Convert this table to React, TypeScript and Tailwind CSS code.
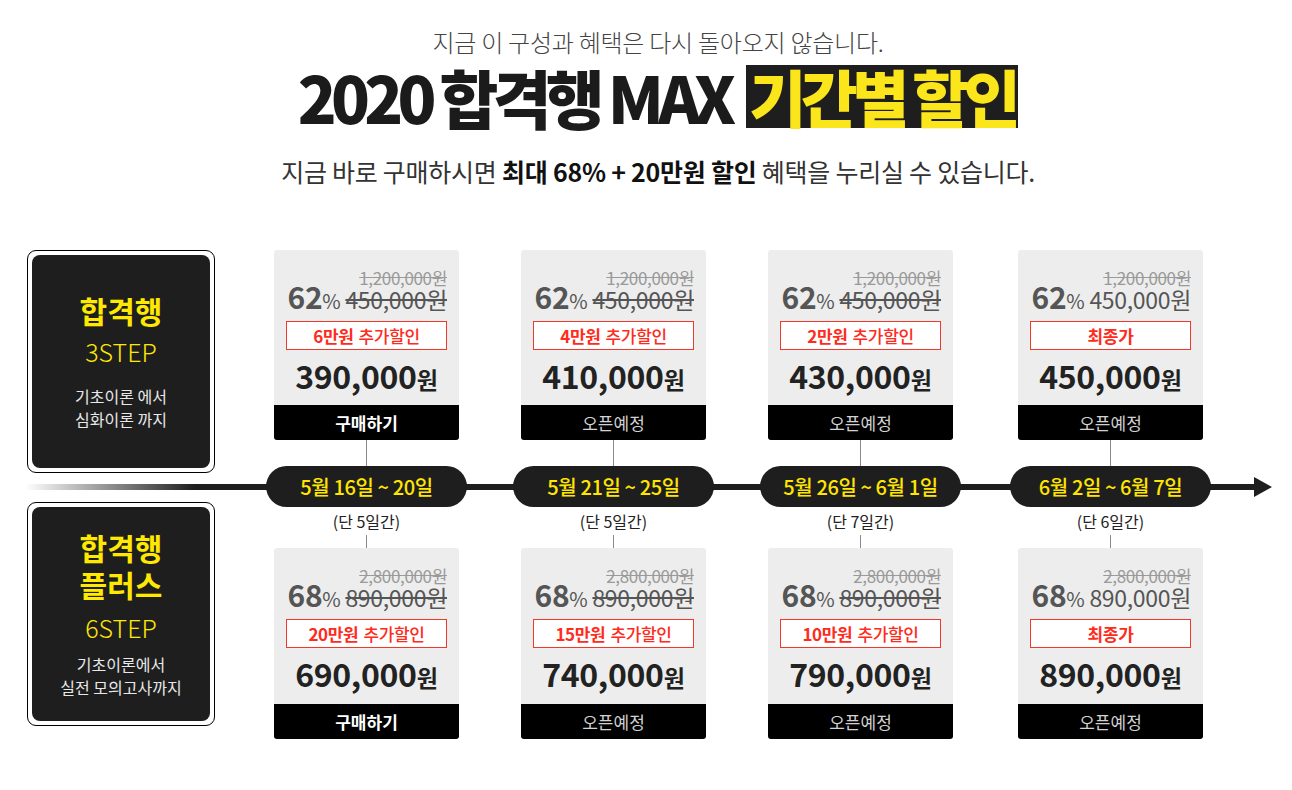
import React from "react";

type Deal = {
  orig: string;
  pct: string;
  sale: string;
  strike: boolean;
  extra?: string;
  price: string;
  buy: boolean;
};

const step3: Deal[] = [
  { orig: "1,200,000원", pct: "62", sale: "450,000원", strike: true, extra: "6만원", price: "390,000", buy: true },
  { orig: "1,200,000원", pct: "62", sale: "450,000원", strike: true, extra: "4만원", price: "410,000", buy: false },
  { orig: "1,200,000원", pct: "62", sale: "450,000원", strike: true, extra: "2만원", price: "430,000", buy: false },
  { orig: "1,200,000원", pct: "62", sale: "450,000원", strike: false, price: "450,000", buy: false },
];

const step6: Deal[] = [
  { orig: "2,800,000원", pct: "68", sale: "890,000원", strike: true, extra: "20만원", price: "690,000", buy: true },
  { orig: "2,800,000원", pct: "68", sale: "890,000원", strike: true, extra: "15만원", price: "740,000", buy: false },
  { orig: "2,800,000원", pct: "68", sale: "890,000원", strike: true, extra: "10만원", price: "790,000", buy: false },
  { orig: "2,800,000원", pct: "68", sale: "890,000원", strike: false, price: "890,000", buy: false },
];

const periods = [
  { date: "5월 16일 ~ 20일", days: "(단 5일간)" },
  { date: "5월 21일 ~ 25일", days: "(단 5일간)" },
  { date: "5월 26일 ~ 6월 1일", days: "(단 7일간)" },
  { date: "6월 2일 ~ 6월 7일", days: "(단 6일간)" },
];

const PriceCard = ({ d, tall }: { d: Deal; tall?: boolean }) => (
  <div className={`w-[185px] ${tall ? "h-[191px]" : "h-[190px]"} rounded-[3px] overflow-hidden bg-[#ededed] flex flex-col`}>
    <div className="flex-1 px-[12px] pt-[18px] flex flex-col">
      <div className="h-[18px] flex items-center justify-end text-[17px] leading-none text-[#9a9a9a] line-through tracking-[-0.02em]">
        {d.orig}
      </div>
      <div className="-mt-[5px] h-[28px] flex items-baseline justify-end leading-none text-[#555] whitespace-nowrap tracking-[-0.02em]">
        <span className="text-[30px] font-bold">{d.pct}</span>
        <span className="text-[20px] mr-[5px]">%</span>
        <span className={d.strike ? "text-[23px] line-through" : "text-[23px]"}>{d.sale}</span>
      </div>
      <div className="mt-[12px] h-[29px] border border-[#f0392b] bg-white flex items-center justify-center text-[17px] text-[#ff2b1c] tracking-[-0.02em]">
        {d.extra ? (
          <>
            <span className="font-bold">{d.extra}</span>
            <span className="ml-[5px] font-medium">추가할인</span>
          </>
        ) : (
          <span className="font-bold">최종가</span>
        )}
      </div>
      <div className="mt-[9px] h-[36px] flex items-baseline justify-center leading-none text-[#222] font-bold whitespace-nowrap">
        <span className="text-[32px] tracking-[-0.01em]">{d.price}</span>
        <span className="text-[23px]">원</span>
      </div>
    </div>
    <div className="shrink-0 h-[35px] bg-black flex items-center justify-center text-[17px]">
      {d.buy ? (
        <span className="font-bold text-white">구매하기</span>
      ) : (
        <span className="text-[#d2d2d2]">오픈예정</span>
      )}
    </div>
  </div>
);

export default function App() {
  return (
    <div className="w-[1292px] h-[790px] bg-white font-['Noto_Sans_CJK_KR','Noto_Sans',sans-serif] text-[#222] overflow-hidden">
      {/* header */}
      <div className="pt-[27px] pl-[24px] flex flex-col items-center">
        <p className="text-[24px] leading-[30px] font-light text-[#444] tracking-[-0.01em]">
          지금 이 구성과 혜택은 다시 돌아오지 않습니다.
        </p>
        <h1 className="mt-[8px] h-[63px] flex items-center">
          <span className="text-[64px] leading-[63px] font-black tracking-[-0.09em] text-[#1b1b1b]">2020 합격행 MAX</span>
          <span className="ml-[16px] h-[63px] px-[3px] bg-[#1e1e1e] text-[62px] leading-[63px] font-black tracking-[-0.09em] text-[#fbe51b]">
            기간별 할인
          </span>
        </h1>
        <p className="mt-[26px] text-[25px] leading-[34px] text-[#333] tracking-[-0.01em]">
          지금 바로 구매하시면 <b className="font-bold text-[#111]">최대 68% + 20만원 할인</b> 혜택을 누리실 수 있습니다.
        </p>
      </div>

      {/* timeline */}
      <div className="relative mt-[62px] flex pl-[27px]">
        <div className="absolute left-[25px] top-[234px] w-[1233px] h-[6px] bg-[linear-gradient(to_right,#ffffff_0px,#1e1e1e_170px,#1e1e1e_100%)]" />
        <svg className="absolute left-[1254px] top-[227px]" width="18" height="20" viewBox="0 0 18 20">
          <path d="M0 0 L18 10 L0 20 Z" fill="#1e1e1e" />
        </svg>

        <div className="w-[188px] flex flex-col gap-[29px]">
          <div className="h-[223px] rounded-[9px] border border-black p-[4px]">
            <div className="h-full rounded-[8px] bg-[#1e1e1e] flex flex-col items-center justify-center text-center">
              <div className="text-[30px] leading-[36px] font-bold text-[#ffe900]">합격행</div>
              <div className="mt-[8px] text-[25px] leading-[30px] font-light text-[#ffe900]">3STEP</div>
              <div className="mt-[19px] text-[16px] leading-[23px] text-[#e8e8e8]">
                기초이론 에서
                <br />
                심화이론 까지
              </div>
            </div>
          </div>
          <div className="h-[224px] rounded-[9px] border border-black p-[4px]">
            <div className="h-full rounded-[8px] bg-[#1e1e1e] flex flex-col items-center justify-center text-center">
              <div className="text-[30px] leading-[37px] font-bold text-[#ffe900]">
                합격행
                <br />
                플러스
              </div>
              <div className="mt-[9px] text-[25px] leading-[30px] font-light text-[#ffe900]">6STEP</div>
              <div className="mt-[11px] text-[16px] leading-[23px] text-[#e8e8e8]">
                기초이론에서
                <br />
                실전 모의고사까지
              </div>
            </div>
          </div>
        </div>

        <div className="ml-[28px] flex">
          {periods.map((p, i) => (
            <div key={i} className={`w-[247px] flex flex-col items-center ${i === 3 ? "ml-[3px]" : ""}`}>
              <PriceCard d={step3[i]} />
              <div className="w-px h-[26px] bg-[#8a8a8a]" />
              <div className="relative z-10 w-[201px] h-[41px] rounded-full bg-[#1e1e1e] flex items-center justify-center text-[20px] font-medium text-[#ffe500] tracking-[-0.02em] whitespace-nowrap">
                {p.date}
              </div>
              <div className="mt-[4px] h-[20px] leading-[20px] text-[16px] text-[#222]">{p.days}</div>
              <div className="mt-[4px] w-px h-[13px] bg-[#8a8a8a]" />
              <PriceCard d={step6[i]} tall />
            </div>
          ))}
        </div>
      </div>
    </div>
  );
}
